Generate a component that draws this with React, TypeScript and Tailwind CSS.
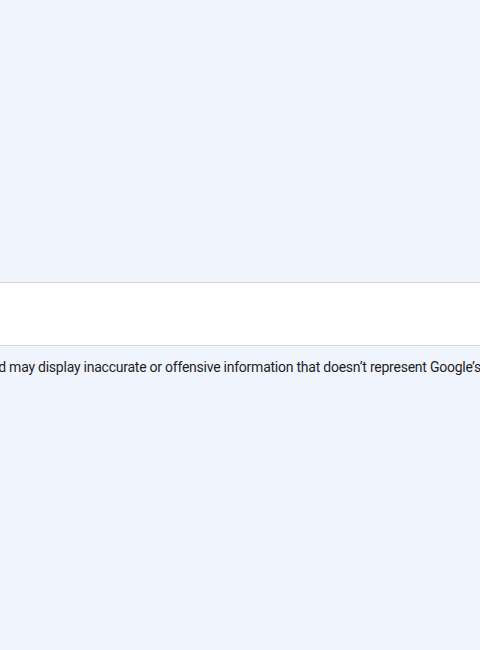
import React from "react";

const App = () => {
  return (
    <div className="h-[650px] w-[480px] overflow-hidden bg-[#f0f4fd] font-['Roboto',sans-serif]">
      <div className="h-[282px]" />
      <div className="h-[64px] border-y border-[#d3d5dc] bg-white" />
      <div className="flex pt-[11px]">
        <p className="ml-[-22px] whitespace-nowrap text-[14px] leading-5 tracking-[-0.24px] text-[#1f1f1f]">
          Bard may display inaccurate or offensive information that doesn’t represent Google’s views.
        </p>
      </div>
    </div>
  );
};

export default App;
